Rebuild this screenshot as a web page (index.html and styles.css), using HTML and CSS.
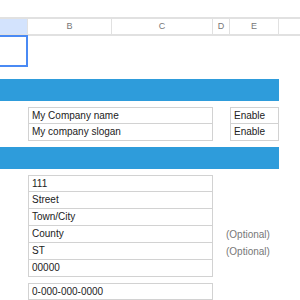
FILE: index.html
```html
<!DOCTYPE html>
<html lang="en">
<head>
    <meta charset="UTF-8">
    <title>Company details sheet</title>
    <link rel="stylesheet" href="styles.css">
</head>
<body>
    <div class="toolbar"></div>

    <div class="row head">
        <div class="hcell sel"></div>
        <div class="hcell">B</div>
        <div class="hcell">C</div>
        <div class="hcell">D</div>
        <div class="hcell">E</div>
        <div class="hcell last"></div>
    </div>

    <div class="row r1">
        <div class="active"></div>
    </div>
    <div class="row r2"></div>

    <div class="row bar"><div class="band"></div></div>
    <div class="row gap"></div>

    <div class="row line">
        <div class="box wide top">My Company name</div>
        <div class="box opt top">Enable</div>
    </div>
    <div class="row line">
        <div class="box wide">My company slogan</div>
        <div class="box opt">Enable</div>
    </div>
    <div class="row gap"></div>

    <div class="row bar"><div class="band"></div></div>
    <div class="row gap"></div>

    <div class="row line"><div class="box wide top">111</div></div>
    <div class="row line"><div class="box wide">Street</div></div>
    <div class="row line"><div class="box wide">Town/City</div></div>
    <div class="row line">
        <div class="box wide">County</div>
        <div class="note">(Optional)</div>
    </div>
    <div class="row line">
        <div class="box wide">ST</div>
        <div class="note">(Optional)</div>
    </div>
    <div class="row line"><div class="box wide">00000</div></div>
    <div class="row gap"></div>

    <div class="row line"><div class="box wide top">0-000-000-0000</div></div>
</body>
</html>
```

FILE: styles.css
```css
body {
    margin: 0;
    font-family: "Liberation Sans", Arial, sans-serif;
    font-size: 10px;
    color: #222;
    background: #fff;
}
.toolbar {
    height: 17px;
}
.row {
    display: grid;
    grid-template-columns: 28px 84px 101px 17px 49px 1fr;
}
.head {
    height: 15px;
    border-top: 2px solid #e1e1e1;
    border-bottom: 2px solid #e1e1e1;
}
.hcell {
    border-right: 1px solid #e1e1e1;
    color: #777;
    font-size: 9px;
    text-align: center;
    line-height: 15px;
}
.hcell.sel {
    background: #d3e3fd;
}
.hcell.last {
    border-right: none;
}
.r1 {
    height: 31px;
}
.active {
    border: 2px solid #4a8af4;
    border-left: none;
    margin-top: -1px;
}
.r2 {
    height: 12px;
}
.bar {
    height: 22px;
}
.band {
    grid-column: 1 / 6;
    background: #2e9cdb;
}
.gap {
    height: 6px;
}
.line {
    height: 17px;
}
.box {
    border: 1px solid #d2d2d2;
    border-top: none;
    padding-left: 3px;
    line-height: 16px;
}
.box.top {
    border-top: 1px solid #d2d2d2;
    line-height: 15px;
}
.wide {
    grid-column: 2 / 4;
}
.opt {
    grid-column: 5;
}
.note {
    grid-column: 5 / 7;
    margin-left: -4px;
    color: #777;
    line-height: 17px;
}
```
